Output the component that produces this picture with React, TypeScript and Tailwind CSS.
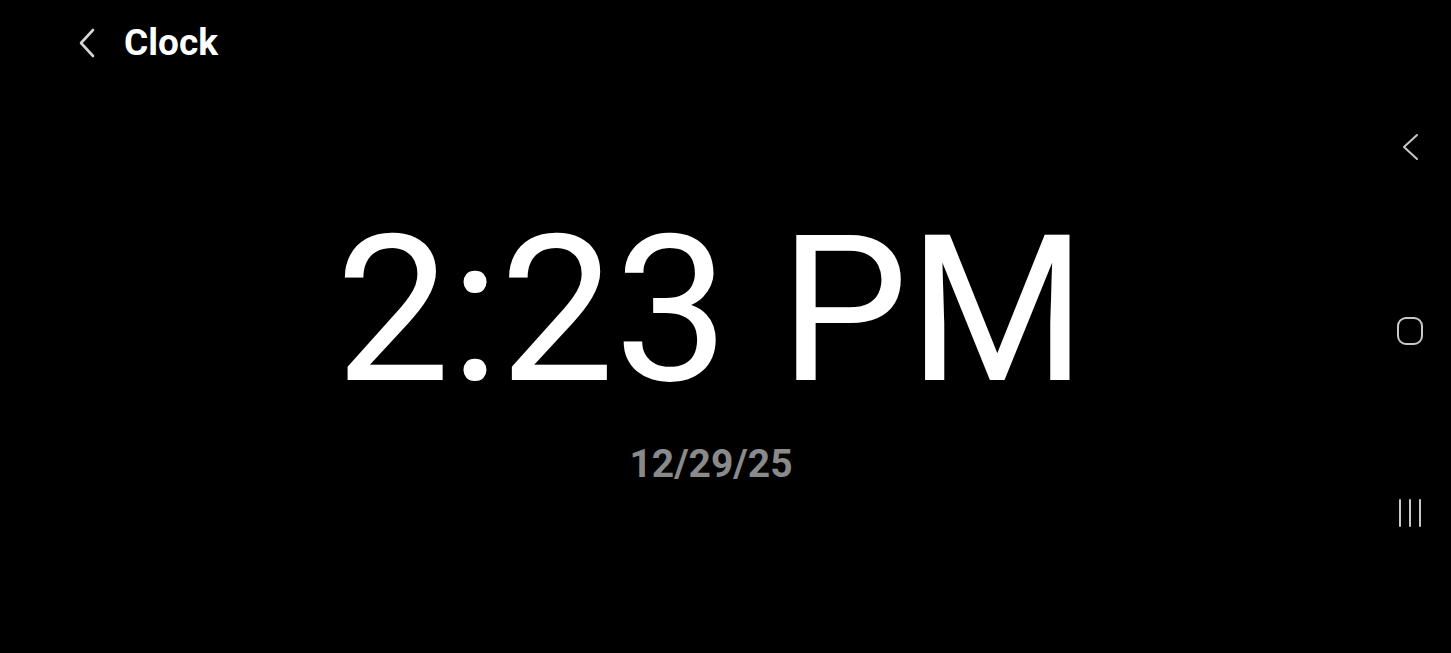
export default function App() {
  return (
    <div
      className="relative h-[653px] w-full overflow-hidden bg-black text-white"
      style={{ fontFamily: 'Roboto, "Noto Sans", sans-serif' }}
    >
      {/* header */}
      <div className="flex items-center pl-[76px] pt-[24px]">
        <svg width="22" height="32" viewBox="0 0 22 32" fill="none" className="mr-[26px]">
          <path d="M17 3 L5 16 L17 29" stroke="#d4d4d4" strokeWidth="2.6" strokeLinecap="round" strokeLinejoin="round" />
        </svg>
        <span className="text-[37px] font-bold leading-none">Clock</span>
      </div>

      {/* time */}
      <div className="flex flex-col items-center pr-[29px]">
        <div className="mt-[148px] text-[204px] font-normal leading-none">2:23 PM</div>
        <div className="mt-[32px] text-[39px] font-bold leading-none text-[#8a8a8a]">12/29/25</div>
      </div>

      {/* system nav bar */}
      <div className="absolute right-[11px] top-0 flex w-[60px] flex-col items-center pt-[133px]">
        <svg width="22" height="28" viewBox="0 0 22 28" fill="none">
          <path d="M18 2 L5 14 L18 26" stroke="#c8c8c8" strokeWidth="2" strokeLinecap="round" strokeLinejoin="round" />
        </svg>
        <svg width="28" height="30" viewBox="0 0 28 30" fill="none" className="mt-[155px]">
          <rect x="2" y="2" width="24" height="26" rx="8" stroke="#c8c8c8" strokeWidth="2" />
        </svg>
        <svg width="28" height="30" viewBox="0 0 28 30" fill="none" className="mt-[152px]">
          <path d="M4 2 V28 M14 2 V28 M24 2 V28" stroke="#c8c8c8" strokeWidth="2" strokeLinecap="round" />
        </svg>
      </div>
    </div>
  );
}
